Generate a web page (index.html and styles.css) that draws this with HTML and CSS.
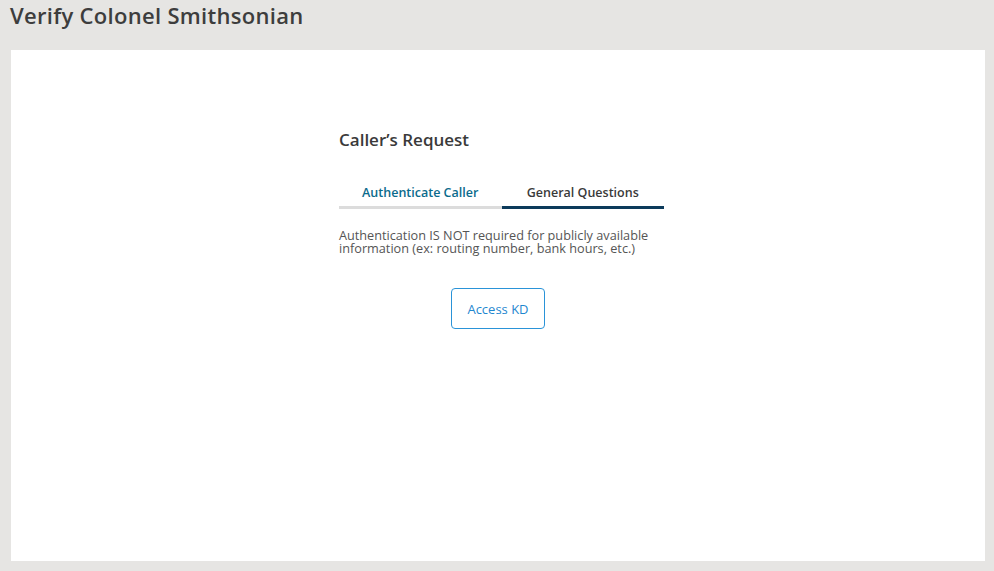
FILE: index.html
```html
<!DOCTYPE html>
<html>
<head>
<meta charset="utf-8">
<link rel="stylesheet" href="styles.css">
</head>
<body>
<header class="topbar">
  <h1 class="page-title">Verify Colonel Smithsonian</h1>
</header>
<main class="panel">
  <section class="request">
    <h2 class="request-title">Caller’s Request</h2>
    <div class="tabs">
      <div class="tab tab-auth">Authenticate Caller</div>
      <div class="tab tab-general active">General Questions</div>
    </div>
    <p class="note">Authentication IS NOT required for publicly available information (ex: routing number, bank hours, etc.)</p>
    <div class="actions">
      <button class="btn-outline">Access KD</button>
    </div>
  </section>
</main>
</body>
</html>
```
FILE: styles.css
```css
html, body {
  margin: 0;
  padding: 0;
  height: 100%;
}
body {
  background: #e6e5e3;
  font-family: "Open Sans", "Liberation Sans", sans-serif;
  color: #3b3b3b;
}
.topbar {
  height: 50px;
  box-sizing: border-box;
  padding: 1px 0 0 10px;
}
.page-title {
  margin: 0;
  font-size: 22px;
  font-weight: 600;
  color: #3d3d3d;
  line-height: 28px;
  letter-spacing: 0.3px;
}
.panel {
  margin: 0 9px 0 11px;
  height: 511px;
  background: #ffffff;
  display: flex;
  justify-content: center;
}
.request {
  width: 325px;
  margin-left: 7px;
  padding-top: 78px;
}
.request-title {
  margin: 0;
  font-size: 17px;
  font-weight: 600;
  color: #3a3a3a;
  line-height: 24px;
}
.tabs {
  display: flex;
  margin-top: 33px;
}
.tab {
  flex: 1;
  text-align: center;
  font-size: 12.5px;
  font-weight: 600;
  line-height: 16px;
  padding-bottom: 5px;
  border-bottom: 3px solid #dcdcdc;
}
.tab-auth {
  color: #0b6b8c;
}
.tab-general {
  color: #3a3a3a;
}
.tab.active {
  border-bottom-color: #0c3b5b;
}
.note {
  margin: 20px 0 0;
  font-size: 12.7px;
  line-height: 13px;
  color: #555555;
}
.actions {
  display: flex;
  justify-content: center;
  margin-top: 33px;
  padding-right: 7px;
}
.btn-outline {
  width: 94px;
  height: 41px;
  background: #ffffff;
  border: 1px solid #2a93d8;
  border-radius: 4px;
  color: #1f87cf;
  font-family: "Open Sans", "Liberation Sans", sans-serif;
  font-size: 13px;
  padding: 0;
}
```
